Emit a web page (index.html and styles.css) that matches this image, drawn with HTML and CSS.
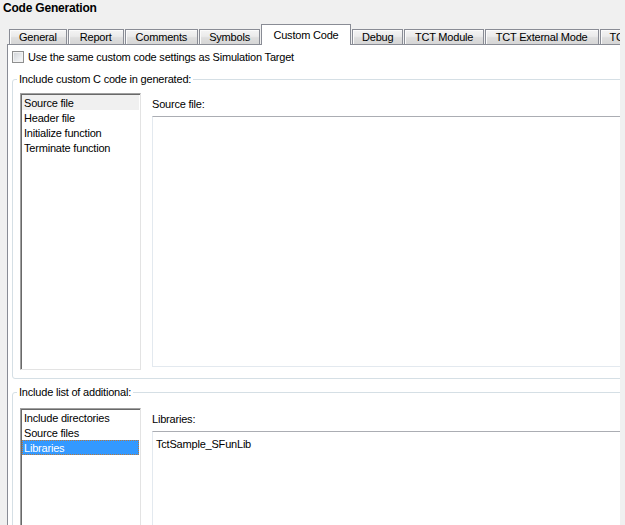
FILE: index.html
```html
<!DOCTYPE html>
<html>
<head>
<meta charset="utf-8">
<title>Code Generation</title>
<link rel="stylesheet" href="styles.css">
</head>
<body>
<div class="window">
  <div class="title">Code Generation</div>
  <div class="tabs">
    <div class="tab">General</div>
    <div class="tab tab-loose">Report</div>
    <div class="tab tab-wide">Comments</div>
    <div class="tab">Symbols</div>
    <div class="tab active">Custom Code</div>
    <div class="tab">Debug</div>
    <div class="tab tab-mid">TCT Module</div>
    <div class="tab tab-wide">TCT External Mode</div>
    <div class="tab">TCT Options</div>
  </div>
  <div class="panel">
    <label class="check-row"><span class="checkbox"></span>Use the same custom code settings as Simulation Target</label>

    <fieldset class="group group-code">
      <legend>Include custom C code in generated:</legend>
      <div class="group-body">
        <ul class="listbox listbox-code">
          <li class="item selected-inactive">Source file</li>
          <li class="item">Header file</li>
          <li class="item">Initialize function</li>
          <li class="item">Terminate function</li>
        </ul>
        <div class="editor">
          <div class="editor-label">Source file:</div>
          <div class="textbox textbox-code"></div>
        </div>
      </div>
    </fieldset>

    <fieldset class="group group-list">
      <legend>Include list of additional:</legend>
      <div class="group-body">
        <ul class="listbox listbox-list">
          <li class="item">Include directories</li>
          <li class="item">Source files</li>
          <li class="item selected">Libraries</li>
        </ul>
        <div class="editor">
          <div class="editor-label">Libraries:</div>
          <div class="textbox textbox-list">TctSample_SFunLib</div>
        </div>
      </div>
    </fieldset>
  </div>
</div>
</body>
</html>
```

FILE: styles.css
```css
html, body {
  margin: 0;
  padding: 0;
}

body {
  background: #f0f0f0;
  font-family: "Liberation Sans", Arial, sans-serif;
  font-size: 11px;
  letter-spacing: -0.2px;
  color: #000;
  overflow: hidden;
}

.window {
  width: 620px;
  height: 525px;
  overflow: hidden;
}

.title {
  height: 24px;
  padding-left: 3px;
  font-size: 12px;
  font-weight: bold;
  line-height: 16px;
  box-sizing: border-box;
}

/* ---------- tabs ---------- */
.tabs {
  display: flex;
  align-items: flex-end;
  gap: 1px;
  height: 20px;
  padding-left: 9px;
  position: relative;
  z-index: 1;
}

.tab {
  flex: none;
  height: 15px;
  box-sizing: border-box;
  padding: 0 9px;
  border: 1px solid #898c95;
  border-bottom: 0;
  line-height: 14px;
  white-space: nowrap;
  background: linear-gradient(#f4f4f4, #ebebeb 45%, #dedede 55%, #d6d6d6);
  box-shadow: inset 1px 1px 0 #fbfbfb;
}

.tab-loose {
  padding: 0 11px;
}

.tab-wide {
  padding: 0 10px;
}

.tab-mid {
  padding: 0 9.5px;
}

.tab.active {
  height: 21px;
  margin-bottom: -1px;
  padding: 3px 11.5px 0;
  background: #fff;
  box-shadow: none;
}

/* ---------- panel ---------- */
.panel {
  width: 700px;
  margin-left: 7px;
  padding-left: 4px;
  border-top: 1px solid #898c95;
  border-left: 1px solid #898c95;
  background: #fff;
  box-sizing: border-box;
}

.check-row {
  display: flex;
  align-items: center;
  gap: 4px;
  height: 12px;
  margin-top: 6px;
  line-height: 12px;
}

.checkbox {
  width: 12px;
  height: 12px;
  box-sizing: border-box;
  border: 1px solid #8e8f8f;
  background: linear-gradient(135deg, #cfd2d6, #eef0f2 70%, #f8f8f8);
  box-shadow: inset 0 0 0 1px #f2f2f2;
}

/* ---------- group boxes ---------- */
.group {
  margin: 10px 0 0;
  padding: 7px 0 8px 7px;
  border: 1px solid #d5dfe5;
  border-radius: 3px;
  min-width: 0;
}

.group legend {
  margin-left: -3px;
  padding: 0 2px;
  line-height: 13px;
}

.group-list {
  margin-top: 7px;
  padding-top: 9px;
}

.group-body {
  display: flex;
  align-items: flex-start;
  gap: 11px;
}

/* ---------- list boxes ---------- */
.listbox {
  flex: none;
  width: 121px;
  margin: 0;
  list-style: none;
  box-sizing: border-box;
  border: 1px solid;
  border-color: #a0a0a0 #e3e3e3 #e3e3e3 #a0a0a0;
  box-shadow: inset 1px 1px 0 #696969;
  padding: 1px 1px 0 1px;
}

.listbox-code {
  height: 277px;
}

.listbox-list {
  height: 200px;
}

.item {
  height: 15px;
  box-sizing: border-box;
  padding: 1px 0 0 2px;
  line-height: 15px;
  white-space: nowrap;
  overflow: hidden;
}

.selected-inactive {
  background: #f0f0f0;
}

.selected {
  background: #3399ff;
  color: #fff;
  outline: 1px dotted #b8783c;
  outline-offset: -1px;
}

/* ---------- editors ---------- */
.editor {
  flex: 1;
  min-width: 0;
}

.editor-label {
  margin-top: 4px;
  margin-bottom: 5px;
  line-height: 14px;
}

.textbox {
  box-sizing: border-box;
  border: 1px solid #e3e9ef;
  border-top-color: #abadb3;
  padding: 5px 3px;
  line-height: 14px;
}

.textbox-code {
  height: 251px;
}

.textbox-list {
  height: 200px;
}
```
